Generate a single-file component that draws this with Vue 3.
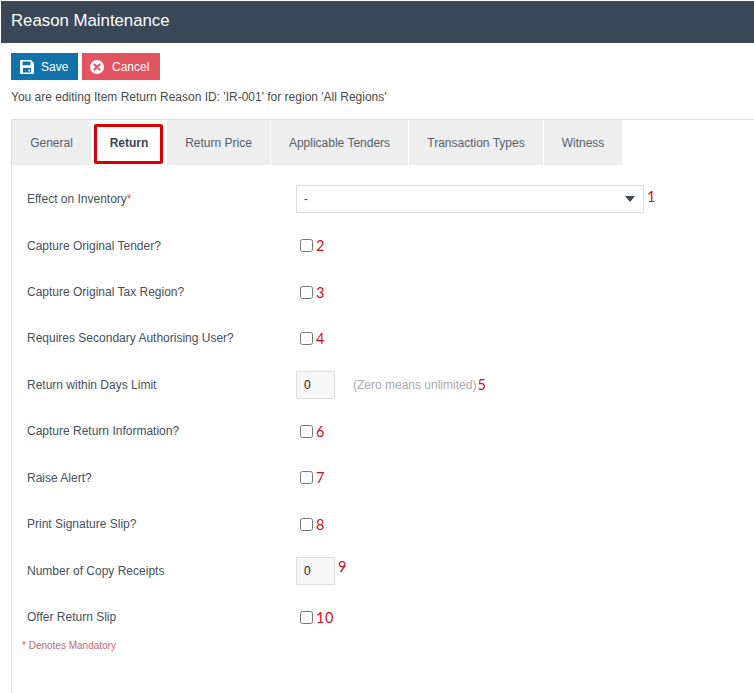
<template>
  <div class="page">
    <header class="title-bar">Reason Maintenance</header>

    <div class="toolbar">
      <button class="btn btn-save" type="button">
        <svg class="btn-icon" width="14" height="14" viewBox="0 0 14 14">
          <path fill="#fff" fill-rule="evenodd" d="M1 0h10l3 3v10a1 1 0 0 1-1 1H1a1 1 0 0 1-1-1V1a1 1 0 0 1 1-1zM2.500 1.500v3.800h8V1.500zM3 8v4.500h8V8zM8.500 9.500h1.600v2H8.500z" />
        </svg>
        Save
      </button>
      <button class="btn btn-cancel" type="button">
        <svg class="btn-icon" width="14" height="14" viewBox="0 0 15 15">
          <circle cx="7.500" cy="7.500" r="7.500" fill="#fff" />
          <path d="M4.800 4.800l5.400 5.400M10.200 4.800l-5.400 5.400" stroke="#e2545f" stroke-width="2.200" stroke-linecap="round" />
        </svg>
        Cancel
      </button>
    </div>

    <p class="edit-note">You are editing Item Return Reason ID: 'IR-001' for region 'All Regions'</p>

    <section class="panel">
      <nav class="tabs">
        <div
          v-for="tab in tabs"
          :key="tab.name"
          class="tab"
          :class="{ active: tab.name === 'Return' }"
          :style="{ width: tab.width + 'px' }"
        >
          {{ tab.name }}
          <span v-if="tab.name === 'Return'" class="highlight"></span>
        </div>
      </nav>

      <form class="form" @submit.prevent>
        <div v-for="row in rows" :key="row.note" class="row">
          <label class="label">{{ row.label }}<span v-if="row.required" class="req">*</span></label>

          <div v-if="row.type === 'select'" class="field">
            <div class="select">
              <span>-</span>
              <span class="caret"></span>
            </div>
            <span class="note note-select">{{ row.note }}</span>
          </div>

          <div v-else-if="row.type === 'check'" class="field">
            <input class="check" type="checkbox">
            <span class="note">{{ row.note }}</span>
          </div>

          <div v-else class="field">
            <input class="number" type="text" value="0">
            <span v-if="row.hint" class="hint">{{ row.hint }}</span>
            <span class="note" :class="row.hint ? 'note-hint' : 'note-raised'">{{ row.note }}</span>
          </div>
        </div>
        <p class="mandatory">* Denotes Mandatory</p>
      </form>
    </section>
  </div>
</template>

<script setup>
const tabs = [
  { name: 'General', width: 79 },
  { name: 'Return', width: 76 },
  { name: 'Return Price', width: 103 },
  { name: 'Applicable Tenders', width: 137 },
  { name: 'Transaction Types', width: 134 },
  { name: 'Witness', width: 78 }
]

const rows = [
  { label: 'Effect on Inventory', required: true, type: 'select', note: '1' },
  { label: 'Capture Original Tender?', type: 'check', note: '2' },
  { label: 'Capture Original Tax Region?', type: 'check', note: '3' },
  { label: 'Requires Secondary Authorising User?', type: 'check', note: '4' },
  { label: 'Return within Days Limit', type: 'number', hint: '(Zero means unlimited)', note: '5' },
  { label: 'Capture Return Information?', type: 'check', note: '6' },
  { label: 'Raise Alert?', type: 'check', note: '7' },
  { label: 'Print Signature Slip?', type: 'check', note: '8' },
  { label: 'Number of Copy Receipts', type: 'number', note: '9' },
  { label: 'Offer Return Slip', type: 'check', note: '10' }
]
</script>

<style>
html,
body {
  margin: 0;
  background: #fff;
}
</style>

<style scoped>
.page {
  height: 693px;
  overflow: hidden;
  padding: 1px 0 0 1px;
  box-sizing: border-box;
  font-family: "Liberation Sans", Arial, sans-serif;
  font-size: 12px;
  color: #46505c;
  background: #fff;
}

.title-bar {
  height: 42px;
  line-height: 39px;
  padding-left: 10px;
  background: #3a4757;
  color: #fff;
  font-size: 16.800px;
}

.toolbar {
  display: flex;
  gap: 4px;
  padding: 10px 0 0 10px;
}

.btn {
  display: flex;
  align-items: center;
  height: 27px;
  padding: 0;
  border: 0;
  color: #fff;
  font-family: inherit;
  font-size: 12px;
  font-weight: 400;
}

.btn-save {
  width: 67px;
  background: #1273ab;
}

.btn-save .btn-icon {
  margin: 0 7px 0 9px;
}

.btn-cancel {
  width: 78px;
  background: #e2545f;
}

.btn-cancel .btn-icon {
  margin: 0 8px 0 8px;
}

.edit-note {
  margin: 10px 0 0 10px;
  height: 15px;
  line-height: 15px;
  color: #4a4a4a;
  font-size: 12px;
}

.panel {
  margin: 14px 0 0 10px;
  height: 600px;
  border-top: 1px solid #ddd;
  border-left: 1px solid #ddd;
}

.tabs {
  display: flex;
  height: 45px;
}

.tab {
  position: relative;
  display: flex;
  align-items: center;
  justify-content: center;
  box-sizing: border-box;
  margin-right: 1px;
  background: #eeeeee;
  color: #55606c;
}

.tab:first-child {
  margin-right: 0;
}

.tab.active {
  margin-right: 0;
  background: #fff;
  color: #3d4752;
  font-weight: 700;
}

.highlight {
  position: absolute;
  left: 3px;
  top: 4px;
  width: 69px;
  height: 40px;
  box-sizing: border-box;
  border: 3px solid #d80000;
  border-radius: 2px;
}

.form {
  padding: 10.950px 0 0 15px;
}

.row {
  display: grid;
  grid-template-columns: 269px 1fr;
  align-items: center;
  height: 46.450px;
}

.label {
  color: #46505c;
}

.req {
  color: #d9534f;
}

.field {
  display: flex;
  align-items: center;
}

.select {
  display: flex;
  align-items: center;
  justify-content: space-between;
  box-sizing: border-box;
  width: 348px;
  height: 28px;
  padding: 0 8px 0 7px;
  border: 1px solid #ddd;
  background: #fff;
}

.caret {
  width: 0;
  height: 0;
  border-left: 5px solid transparent;
  border-right: 5px solid transparent;
  border-top: 6px solid #3f4a58;
}

.check {
  appearance: none;
  width: 13px;
  height: 13px;
  margin: 0 3px 0 4px;
  border: 1px solid #777;
  border-radius: 2.500px;
  background: #fff;
}

.number {
  box-sizing: border-box;
  width: 39px;
  height: 28px;
  padding: 0 0 0 7px;
  border: 1px solid #ddd;
  background: #f7f7f7;
  color: #222;
  font-family: inherit;
  font-size: 12px;
}

.hint {
  margin-left: 18px;
  color: #aaa;
}

.note {
  color: #cc1122;
  font-family: Lato, sans-serif;
  font-size: 14.500px;
  letter-spacing: 0.500px;
}

.note-select {
  position: relative;
  top: -3px;
  margin-left: 3px;
}

.note-hint {
  margin-left: 1px;
}

.note-raised {
  position: relative;
  top: -4px;
  margin-left: 3px;
}

.mandatory {
  margin: 0 0 0 -5px;
  color: #bd6a72;
  font-size: 10px;
}
</style>
